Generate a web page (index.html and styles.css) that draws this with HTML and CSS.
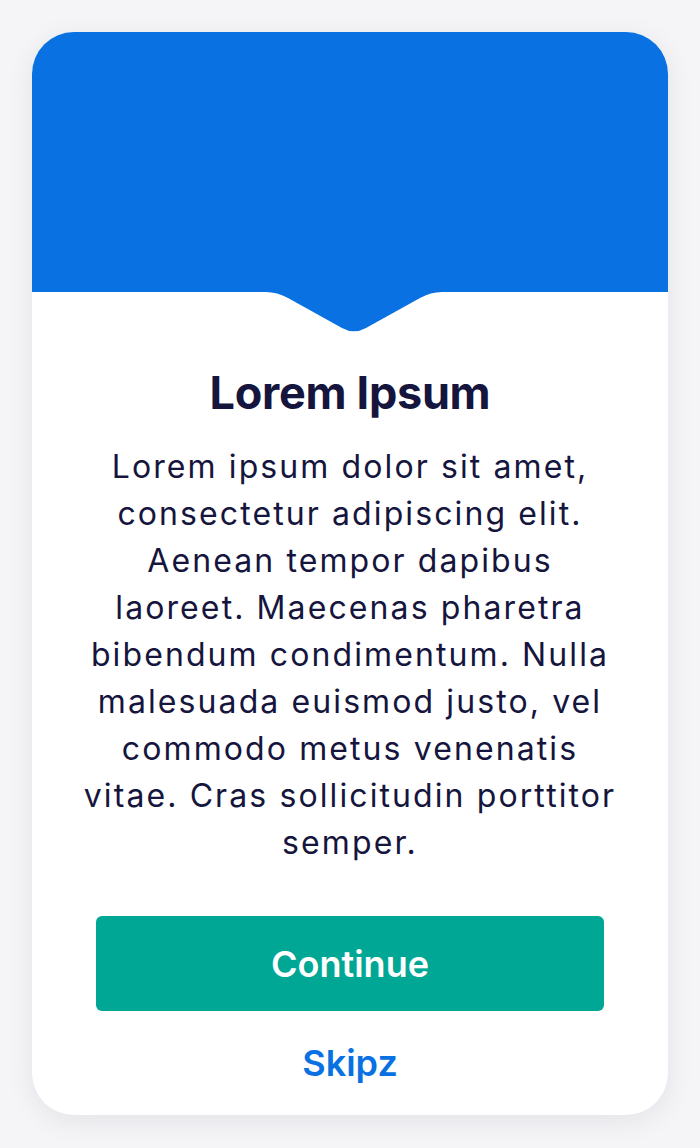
FILE: index.html
```html
<!DOCTYPE html>
<html lang="en">
<head>
<meta charset="utf-8">
<title>Lorem Ipsum</title>
<link rel="stylesheet" href="styles.css">
</head>
<body>
  <main class="card">
    <div class="card-header"></div>
    <svg class="notch" width="180" height="40" viewBox="0 0 180 40" aria-hidden="true">
      <path d="M4 -1 L4 0 Q15.4 0 26 6 L80 36 Q92 42.7 104 36 L158 6 Q168.6 0 180 0 L180 -1 Z" fill="#0971e2"/>
    </svg>
    <div class="card-body">
      <h1 class="title">Lorem Ipsum</h1>
      <p class="text">Lorem ipsum dolor sit amet, consectetur adipiscing elit. Aenean tempor dapibus laoreet. Maecenas pharetra bibendum condimentum. Nulla malesuada euismod justo, vel commodo metus venenatis vitae. Cras sollicitudin porttitor semper.</p>
      <button class="btn-primary" type="button">Continue</button>
      <button class="btn-link" type="button">Skipz</button>
    </div>
  </main>
</body>
</html>
```

FILE: styles.css
```css
* {
  box-sizing: border-box;
}

html, body {
  margin: 0;
  padding: 0;
}

body {
  background: #f5f5f7;
  padding: 32px;
  font-family: Inter, "Noto Sans", "Liberation Sans", sans-serif;
  color: #15153d;
}

.card {
  width: 636px;
  background: #ffffff;
  border-radius: 42px;
  overflow: hidden;
  box-shadow: 0 6px 28px rgba(30, 30, 70, 0.08);
  display: flex;
  flex-direction: column;
  align-items: center;
}

.card-header {
  align-self: stretch;
  height: 260px;
  background: #0971e2;
}

.notch {
  display: block;
  overflow: visible;
  margin-left: 4px;
}

.card-body {
  align-self: stretch;
  display: flex;
  flex-direction: column;
  align-items: center;
  padding: 0 0 30px;
}

.title {
  margin: 32px 0 0;
  font-size: 45px;
  line-height: 58px;
  font-weight: 700;
  letter-spacing: -0.3px;
  color: #15153d;
  text-align: center;
}

.text {
  margin: 21px 0 0;
  padding: 0 50px;
  font-size: 32px;
  line-height: 47px;
  font-weight: 400;
  letter-spacing: 2.1px;
  text-align: center;
  color: #15153d;
}

.btn-primary {
  margin-top: 50px;
  width: 508px;
  height: 95px;
  border: none;
  border-radius: 6px;
  background: #00a795;
  color: #ffffff;
  font-family: inherit;
  font-size: 36px;
  font-weight: 600;
  padding: 0;
}

.btn-link {
  margin-top: 30px;
  border: none;
  background: none;
  padding: 0;
  font-family: inherit;
  font-size: 36px;
  line-height: 44px;
  font-weight: 600;
  color: #0971e2;
}
```
